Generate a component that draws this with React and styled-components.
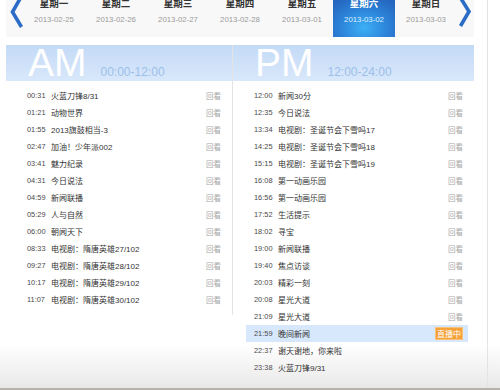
import React from "react";
import styled, { createGlobalStyle } from "styled-components";

const GlobalStyle = createGlobalStyle`
  html, body { margin: 0; padding: 0; background: #fff; }
  body { overflow: hidden; font-family: "Liberation Sans", "Noto Sans CJK SC", sans-serif; }
`;

const Page = styled.div`
  width: 500px;
  height: 388px;
  border-bottom: 2px solid #b6b2aa;
  overflow: hidden;
  display: flex;
  background: linear-gradient(to bottom, #fff 0, #fff 345px, #e8e8e8 388px);
`;

const Main = styled.div`
  width: 488px;
  padding-left: 6px;
  box-sizing: border-box;
  border-right: 1px solid #e4e4e4;
`;

const TopBar = styled.div`
  width: 468px;
  height: 37px;
  box-sizing: border-box;
  padding-left: 4px;
  display: flex;
  align-items: flex-start;
  background: #f8f8f8;
`;

const Arrow = styled.svg`
  flex: none;
  display: block;
  margin-left: ${(p) => p.$ml || 0}px;
`;

const Tabs = styled.div`
  display: flex;
`;

const Tab = styled.div`
  width: 62px;
  height: 37px;
  display: flex;
  flex-direction: column;
  align-items: center;
  overflow: hidden;
  background: ${(p) =>
    p.$active
      ? "radial-gradient(ellipse 70% 90% at 50% 75%, #3cb0f7 0%, #2c83d8 55%, #2566bf 100%)"
      : "transparent"};
`;

const DayName = styled.div`
  margin-top: -3px;
  line-height: 12px;
  font-size: 9.5px;
  font-weight: bold;
  font-family: "Noto Sans CJK SC", sans-serif;
  color: ${(p) => (p.$active ? "#fff" : "#333")};
`;

const DateText = styled.div`
  margin-top: 5px;
  line-height: 12px;
  font-size: 7.8px;
  font-family: "Liberation Sans", sans-serif;
  color: ${(p) => (p.$active ? "#dcefff" : "#9a9a9a")};
`;

const Schedule = styled.div`
  margin-top: 8px;
  display: flex;
  align-items: flex-start;
`;

const Column = styled.div`
  width: ${(p) => p.$w}px;
  padding-bottom: 7px;
  border-right: ${(p) => (p.$divider ? "1px solid #e3e3e3" : "none")};
`;

const Band = styled.div`
  height: 36px;
  overflow: hidden;
  display: flex;
  align-items: baseline;
  padding-left: 22px;
  background: linear-gradient(to bottom, #c3daf6 0%, #d9e8fb 100%);
`;

const Half = styled.span`
  font-family: "Liberation Sans", sans-serif;
  font-size: 39px;
  line-height: 36px;
  color: #fff;
  margin-right: 14px;
`;

const Range = styled.span`
  font-family: "Liberation Sans", sans-serif;
  font-size: 12px;
  color: #9cbfe9;
`;

const List = styled.div`
  padding-top: 6px;
`;

const Row = styled.div`
  height: 17px;
  margin: 0 6px 0 13px;
  padding: 0 5px 0 8px;
  display: flex;
  align-items: center;
  background: ${(p) => (p.$live ? "#d7e8fc" : "transparent")};
`;

const Time = styled.span`
  width: 24px;
  flex: none;
  font-family: "Liberation Sans", sans-serif;
  font-size: 7.4px;
  color: #4a4a4a;
`;

const Title = styled.span`
  flex: 1;
  font-family: "Liberation Sans", "Noto Sans CJK SC", sans-serif;
  font-size: 8px;
  color: #333;
  white-space: nowrap;
`;

const Replay = styled.span`
  font-family: "Noto Sans CJK SC", sans-serif;
  font-size: 7.5px;
  color: #a8a8a8;
`;

const LiveBadge = styled.span`
  font-family: "Noto Sans CJK SC", sans-serif;
  font-size: 8px;
  line-height: 11px;
  padding: 0 1px;
  color: #fff;
  background: #f5a23b;
  border: 1px solid #f9c07a;
`;

const days = [
  ["星期一", "2013-02-25"],
  ["星期二", "2013-02-26"],
  ["星期三", "2013-02-27"],
  ["星期四", "2013-02-28"],
  ["星期五", "2013-03-01"],
  ["星期六", "2013-03-02"],
  ["星期日", "2013-03-03"],
];

const am = [
  ["00:31", "火蓝刀锋8/31"],
  ["01:21", "动物世界"],
  ["01:55", "2013旗鼓相当-3"],
  ["02:47", "加油！少年派002"],
  ["03:41", "魅力纪录"],
  ["04:31", "今日说法"],
  ["04:59", "新闻联播"],
  ["05:29", "人与自然"],
  ["06:00", "朝闻天下"],
  ["08:33", "电视剧：隋唐英雄27/102"],
  ["09:27", "电视剧：隋唐英雄28/102"],
  ["10:17", "电视剧：隋唐英雄29/102"],
  ["11:07", "电视剧：隋唐英雄30/102"],
];

const pm = [
  ["12:00", "新闻30分"],
  ["12:35", "今日说法"],
  ["13:34", "电视剧：圣诞节会下雪吗17"],
  ["14:25", "电视剧：圣诞节会下雪吗18"],
  ["15:15", "电视剧：圣诞节会下雪吗19"],
  ["16:08", "第一动画乐园"],
  ["16:56", "第一动画乐园"],
  ["17:52", "生活提示"],
  ["18:02", "寻宝"],
  ["19:00", "新闻联播"],
  ["19:40", "焦点访谈"],
  ["20:03", "精彩一刻"],
  ["20:08", "星光大道"],
  ["21:09", "星光大道"],
  ["21:59", "晚间新闻", "live"],
  ["22:37", "谢天谢地，你来啦", "next"],
  ["23:38", "火蓝刀锋9/31", "next"],
];

function Programs({ items }) {
  return (
    <List>
      {items.map(([t, name, state]) => (
        <Row key={t} $live={state === "live"}>
          <Time>{t}</Time>
          <Title>{name}</Title>
          {state === "live" ? (
            <LiveBadge>直播中</LiveBadge>
          ) : state === "next" ? null : (
            <Replay>回看</Replay>
          )}
        </Row>
      ))}
    </List>
  );
}

export default function App() {
  return (
    <>
      <GlobalStyle />
      <Page>
        <Main>
          <TopBar>
            <Arrow width="13" height="30" viewBox="0 0 13 30">
              <polyline points="11,-3 2.5,12 11.5,27" fill="none" stroke="#2b6cc6" strokeWidth="3.6" strokeLinejoin="miter" />
            </Arrow>
            <Tabs>
              {days.map(([d, date], i) => (
                <Tab key={d} $active={i === 5}>
                  <DayName $active={i === 5}>{d}</DayName>
                  <DateText $active={i === 5}>{date}</DateText>
                </Tab>
              ))}
            </Tabs>
            <Arrow $ml={1} width="14" height="30" viewBox="0 0 14 30">
              <polyline points="2,-3 11,11.5 2.5,26" fill="none" stroke="#2b6cc6" strokeWidth="3.6" strokeLinejoin="miter" />
            </Arrow>
          </TopBar>
          <Schedule>
            <Column $w={226} $divider>
              <Band>
                <Half>AM</Half>
                <Range>00:00-12:00</Range>
              </Band>
              <Programs items={am} />
            </Column>
            <Column $w={241}>
              <Band>
                <Half>PM</Half>
                <Range>12:00-24:00</Range>
              </Band>
              <Programs items={pm} />
            </Column>
          </Schedule>
        </Main>
      </Page>
    </>
  );
}
